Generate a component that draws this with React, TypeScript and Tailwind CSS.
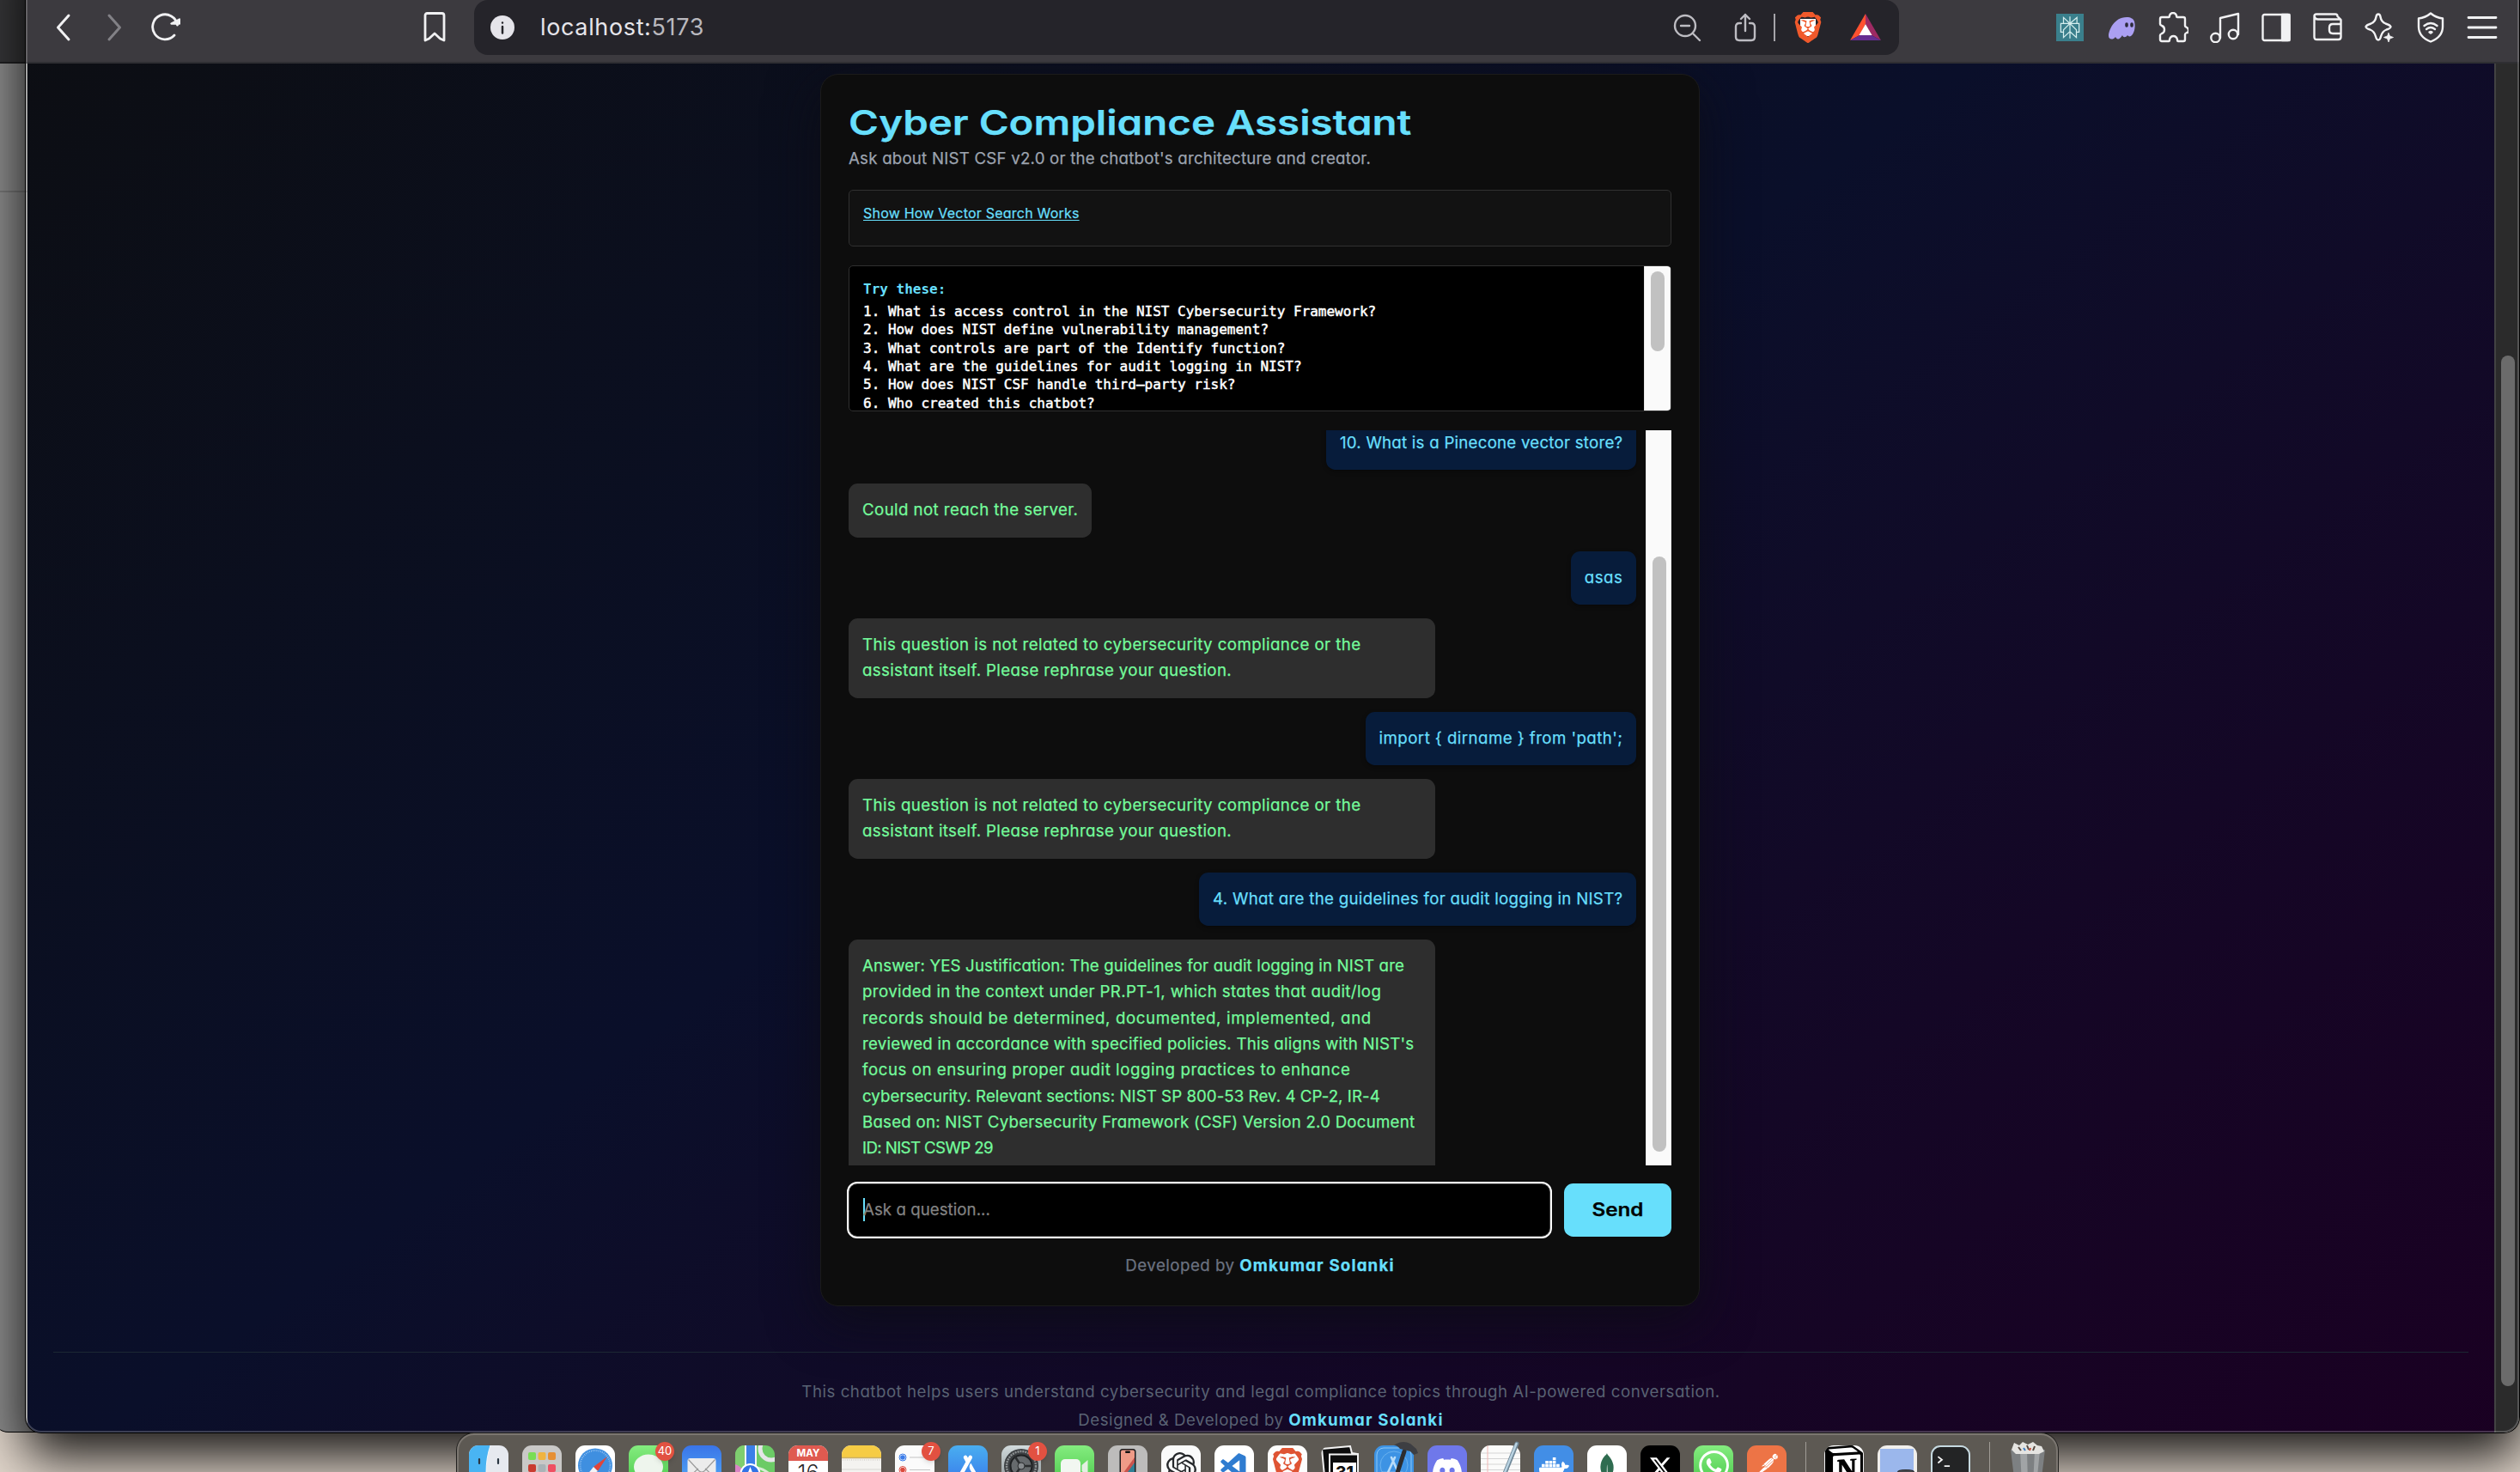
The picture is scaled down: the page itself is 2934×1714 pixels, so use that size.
import type { ReactNode } from "react";
import { SiOpenai, SiBrave, SiDiscord, SiDocker, SiMongodb, SiX, SiWhatsapp, SiPostman, SiNotion, SiAppstore, SiPerplexity } from "react-icons/si";
import { VscVscode } from "react-icons/vsc";

type Line = [text: string, tracking: string];
type Message = { from: "user" | "bot"; lines: Line[] };

const offTopic: Line[] = [
  ["This question is not related to cybersecurity compliance or the", "tracking-[0.447px]"],
  ["assistant itself. Please rephrase your question.", "tracking-[0.372px]"],
];

const messages: Message[] = [
  { from: "user", lines: [["10. What is a Pinecone vector store?", "tracking-[0.251px]"]] },
  { from: "bot", lines: [["Could not reach the server.", "tracking-[0.42px]"]] },
  { from: "user", lines: [["asas", "tracking-[0.5px]"]] },
  { from: "bot", lines: offTopic },
  { from: "user", lines: [["import { dirname } from 'path';", "tracking-[0.446px]"]] },
  { from: "bot", lines: offTopic },
  { from: "user", lines: [["4. What are the guidelines for audit logging in NIST?", "tracking-[0.31px]"]] },
  {
    from: "bot",
    lines: [
      ["Answer: YES Justification: The guidelines for audit logging in NIST are", "tracking-[0.15px]"],
      ["provided in the context under PR.PT-1, which states that audit/log", "tracking-[0.39px]"],
      ["records should be determined, documented, implemented, and", "tracking-[0.64px]"],
      ["reviewed in accordance with specified policies. This aligns with NIST's", "tracking-[0.24px]"],
      ["focus on ensuring proper audit logging practices to enhance", "tracking-[0.56px]"],
      ["cybersecurity. Relevant sections: NIST SP 800-53 Rev. 4 CP-2, IR-4", "tracking-[0.06px]"],
      ["Based on: NIST Cybersecurity Framework (CSF) Version 2.0 Document", "tracking-[0.24px]"],
      ["ID: NIST CSWP 29", "tracking-[-0.595px]"],
    ],
  },
];

const prompts = [
  "1. What is access control in the NIST Cybersecurity Framework?",
  "2. How does NIST define vulnerability management?",
  "3. What controls are part of the Identify function?",
  "4. What are the guidelines for audit logging in NIST?",
  "5. How does NIST CSF handle third–party risk?",
  "6. Who created this chatbot?",
];

function Author() {
  return <span className="font-bold tracking-[1.183px] text-[#67dffc]">Omkumar Solanki</span>;
}

function Bubble({ message }: { message: Message }) {
  const user = message.from === "user";
  return (
    <div className={user ? "flex justify-end" : "flex justify-start"}>
      <div
        className={
          user
            ? "rounded-[10.67px] bg-[#071c3b] p-4 text-[#67dffc] shadow-[0_2px_5px_rgba(0,0,0,0.35)]"
            : "max-w-[683px] rounded-[10.67px] bg-[#2e2e2e] p-4 text-[#74fb9b]" + (message.lines.length > 1 ? " w-[683px]" : "")
        }
      >
        {message.lines.map(([text, tracking]) => (
          <div key={text} className={`leading-[30.33px] whitespace-pre ${tracking}`}>{text}</div>
        ))}
      </div>
    </div>
  );
}

function Card() {
  return (
    <main className="ml-[923px] flex h-[1435px] w-[1024px] flex-col rounded-[21px] border border-[#1b1b1b] bg-[#0d0d0d] p-8 shadow-[0_16px_60px_rgba(13,13,20,0.8)] [-webkit-text-stroke:0.25px]">
      <h1 className="h-12 origin-left scale-x-[1.186] self-start text-[40px] leading-[48px] font-semibold whitespace-nowrap text-[#67dffc]">
        Cyber Compliance Assistant
      </h1>
      <p className="mt-[5px] text-[18.67px] leading-[26.67px] tracking-[0.23px] text-[#9ca3af]">
        Ask about NIST CSF v2.0 or the chatbot's architecture and creator.
      </p>
      <section className="mt-[22px] h-[66px] rounded-[5px] border border-[#303030] bg-[#121212] px-4 pt-[14px]">
        <a className="text-base leading-[21px] tracking-[0.216px] text-[#67dffc] underline underline-offset-2">Show How Vector Search Works</a>
      </section>
      <section className="mt-[22px] flex h-[170px] shrink-0 overflow-hidden rounded-[5px] border border-[#303030] bg-black font-['DejaVu_Sans_Mono',monospace] text-base leading-[21.33px]">
        <div className="grow px-4 pt-4">
          <p className="font-bold text-[#67dffc] [-webkit-text-stroke:0px]">Try these:</p>
          <ol className="mt-[5px] text-white [-webkit-text-stroke:0.5px]">
            {prompts.map((p) => (
              <li key={p} className="whitespace-pre">{p}</li>
            ))}
          </ol>
        </div>
        <div className="w-[31px] border-x border-x-[#e8e8e8] bg-[#fafafa] pt-[6px] pl-[7px]">
          <div className="h-[93px] w-4 rounded-full bg-[#c1c1c1]" />
        </div>
      </section>
      <section className="mt-[22px] flex h-[856px] shrink-0 overflow-hidden text-[18.67px]">
        <div className="-mt-[15.6px] flex grow flex-col gap-4 pr-[10.67px]">
          {messages.map((m, i) => (
            <Bubble key={i} message={m} />
          ))}
        </div>
        <div className="w-[30px] border-x border-x-[#e8e8e8] bg-[#fafafa] pt-[147px] pl-[7px]">
          <div className="h-[693px] w-4 rounded-full bg-[#c1c1c1]" />
        </div>
      </section>
      <div className="mt-[21px] flex h-[62px] shrink-0 gap-4">
        <div className="flex w-[817px] items-center rounded-[10px] border border-[#444] bg-black pl-4 outline-[2.67px] outline-white">
          <span className="h-[27px] w-[2px] bg-[#67dffc]" />
          <span className="-ml-[2px] text-[18.67px] tracking-[0.055px] text-[#838383]">Ask a question...</span>
        </div>
        <button className="flex grow items-center justify-center rounded-[10.67px] bg-[#67dffc] text-[21.33px] font-semibold text-black">
          <span className="scale-x-[1.135]">Send</span>
        </button>
      </div>
      <p className="mt-[21px] text-center text-[18.67px] leading-[26.67px] tracking-[0.504px] text-[#6b7280]">
        Developed by <Author />
      </p>
    </main>
  );
}

const stroke = { fill: "none", stroke: "#f1f1f3", strokeWidth: 2.4, strokeLinecap: "round", strokeLinejoin: "round" } as const;

function Glyph({ children, className = "size-9" }: { children: ReactNode; className?: string }) {
  return (
    <svg viewBox="0 0 36 36" className={`shrink-0 ${className}`} {...stroke}>
      {children}
    </svg>
  );
}

function Slot({ children }: { children: ReactNode }) {
  return <div className="flex w-[60px] justify-center">{children}</div>;
}

function Toolbar() {
  return (
    <header className="h-[154px] shrink-0 border-b-2 border-[#2f2f33] bg-[#3c3a3f] pt-20">
      <div className="flex h-16 items-center">
        <div className="ml-6 flex w-[498px] shrink-0 items-center">
          <Glyph className="ml-[1px] size-9"><path d="M25 4 12.500 18 25 32" strokeWidth="3" /></Glyph>
          <Glyph className="ml-6 size-9"><path d="M12 4 24.500 18 12 32" stroke="#828186" strokeWidth="3" /></Glyph>
          <Glyph className="ml-[23px] size-9">
            <path d="M29 27a14.500 14.500 0 1 1 3.500-12" strokeWidth="2.800" />
            <path d="M25.500 13.500h9.500v-5z" fill="#f1f1f3" />
          </Glyph>
          <Glyph className="ml-[278px] size-9"><path d="M7 4q0-2.500 2.500-2.500h17q2.500 0 2.500 2.500v29l-4.500-2-6.500-6-6.500 6-4.500 2z" strokeWidth="2.800" /></Glyph>
        </div>
        <div className="flex h-16 w-[1659px] shrink-0 items-center rounded-2xl bg-[#25242a] pl-[19px]">
          <span className="flex size-7 flex-col items-center justify-center rounded-full bg-[#e5e4ea]">
            <svg viewBox="0 0 28 28" className="size-7" fill="none" stroke="#25242a" strokeWidth="2.500" strokeLinecap="round">
              <path d="M14 13v7.500M14 8.500v.1" />
            </svg>
          </span>
          <span className="ml-[30px] text-[27px] tracking-[0.64px] text-[#e6e5ea] [font-feature-settings:normal]">
            localhost:<span className="text-[#b9b8be]">5173</span>
          </span>
          <Glyph className="ml-auto size-9">
            <g stroke="#bdbcc2"><circle cx="16" cy="16" r="12" /><path d="m25 25 8 8M11 16h10" /></g>
          </Glyph>
          <Glyph className="ml-8 size-9">
            <g stroke="#bdbcc2"><path d="M18 22V3m-5 5 5-5 5 5M13 13h-2q-4 0-4 4v12q0 4 4 4h14q4 0 4-4V17q0-4-4-4h-2" /></g>
          </Glyph>
          <span className="ml-[15px] h-8 w-[2px] bg-[#a5a4a9]" />
          <span className="relative ml-[20px] flex h-9 w-9 justify-center">
            <span className="absolute inset-x-[9px] inset-y-2 bg-white" />
            <SiBrave className="relative size-9 text-[#f0592b]" />
          </span>
          <svg viewBox="0 0 36 32" className="mr-[21px] ml-[31px] h-8 w-9">
            <path d="M18 0 0 31l11-6L18 12z" fill="#ff5130" />
            <path d="M18 0v12l7 13 11 6z" fill="#9e2a63" />
            <path d="m0 31 11-6h14l11 6z" fill="#662d91" />
            <path d="M18 12 10.500 25h15z" fill="#fff" />
          </svg>
        </div>
        <div className="mr-[13px] ml-auto flex items-center">
          <Slot><span className="flex size-8 items-center justify-center bg-[#3a7f8c]"><SiPerplexity className="size-[26px] text-[#d5eeee]" /></span></Slot>
          <Slot>
            <Glyph><path d="M33 11c2 8-1 15-4 17-2 1-3 0-4-1-2 3-5 3-6 0-3 5-6 6-8 2-3 4-8 3-8-1C3 22 9 6 24 6c5 0 8 2 9 5z" fill="#ab9ff2" stroke="none" /><path d="M24 14v2M30 14v2" stroke="#2c2a3a" strokeWidth="3.500" /></Glyph>
          </Slot>
          <Slot><Glyph><path d="M3 8q0-2 2-2h8q1 0 1-2 1-3 4-3t4 3q0 2 1 2h7q2 0 2 2v8q0 1 2 2 2 1 2 3.500T34 24q-2 1-2 2v6q0 2-2 2h-6q-1 0-1-2-1-4-4.500-4T14 32q0 2-1 2H5q-2 0-2-2v-5q0-1 2-2 3-1 3-4.500T5 16q-2-1-2-2z" /></Glyph></Slot>
          <Slot><Glyph><circle cx="7.500" cy="30" r="5.200" /><circle cx="28" cy="26" r="5.200" /><path d="M13 30V7l21-5v24" /></Glyph></Slot>
          <Slot><Glyph><rect x="2.500" y="3" width="31" height="30" rx="2" /><path d="M25 3h8.500v30H25z" fill="#f1f1f3" /></Glyph></Slot>
          <Slot><Glyph><path d="M2.500 5q0-2.500 2.500-2.500h22q2.500 0 2.500 2.500l4 4v20q0 3-3 3h-25q-3 0-3-3zM3 5.500q0 3 4 3h26M33.500 14H24q-4 0-4 4v3q0 4 4 4h9.500" /></Glyph></Slot>
          <Slot><Glyph><path d="M17 2.500q2 0 2.500 3 1 6 6 8 5 1.500 6 3.500 0 2-5 3.500-5 2-6.500 8-1 4-3 4t-3-4q-1.500-6-6.500-8-5-1.500-5-3.500 1-2 6-3.500 5-2 6-8 .5-3 2.500-3z" /><path d="M29 24.500 30.500 28l4 1.500-4 1.500-1.500 4-1.500-4-4-1.500 4-1.500z" fill="#f1f1f3" strokeWidth=".8" /></Glyph></Slot>
          <Slot><Glyph><path d="M18 1.500q6 5 14 6v9.500q0 12-14 17.500Q4 29 4 17V7.500q8-1 14-6z" /><path d="M10.500 16q7.500-6 15 0M13 20q5-4 10 0M16.500 23.500q1.500-1.200 3 0l-1.500 1z" /></Glyph></Slot>
          <Slot><Glyph><path d="M2 6.500h32M2 18h32M2 29.500h32" strokeWidth="2.800" /></Glyph></Slot>
        </div>
      </div>
    </header>
  );
}

function Tile({ bg = "", badge, children }: { bg?: string; badge?: string; children: ReactNode }) {
  return (
    <div className="flex w-[62px] shrink-0 justify-center">
      <div className="relative size-[46px]">
        <div className={`flex size-[46px] justify-center overflow-hidden rounded-[11px] ${bg}`}>{children}</div>
        {badge && (
          <span className="absolute -top-1 -right-[7px] flex size-[22px] items-center justify-center rounded-full bg-[#e25141] text-[13px] text-white shadow-md">{badge}</span>
        )}
      </div>
    </div>
  );
}

function Art({ children }: { children: ReactNode }) {
  return <svg viewBox="0 0 46 46" className="size-[46px]">{children}</svg>;
}

function Divider() {
  return <div className="flex w-7 shrink-0 justify-center"><span className="-mt-1 h-16 w-px bg-[#a09c96]" /></div>;
}

function Dock() {
  return (
    <div className="absolute top-[1669px] left-[532px] flex h-[72px] w-[1864px] rounded-[20px] border-2 border-[#7b7670] bg-[#5d5953] pt-3 pl-1 shadow-[0_0_0_1px_#22211f]">
      <Tile bg="bg-[#e6e9ef]">
        <Art>
          <path d="M0 0h25q-5 14-5 32h7q0 6 1 14H0z" fill="#49b4f3" />
          <path d="M25 0q-5 14-5 32h7" fill="none" stroke="#f4f7fa" strokeWidth="1" />
          <path d="M12 16v5M34 16v5" stroke="#2a3642" strokeWidth="2.200" strokeLinecap="round" />
        </Art>
      </Tile>
      <Tile bg="bg-[#c9c8c7]">
        <Art>
          <rect x="7" y="8" width="9" height="9" rx="2" fill="#79dd55" /><rect x="18.500" y="8" width="9" height="9" rx="2" fill="#f0b441" /><rect x="30" y="8" width="9" height="9" rx="2" fill="#e68f33" />
          <rect x="7" y="22" width="9" height="9" rx="2" fill="#c93b30" /><rect x="18.500" y="22" width="9" height="9" rx="2" fill="#a9b3b7" /><rect x="30" y="22" width="9" height="9" rx="2" fill="#ef4f63" />
        </Art>
      </Tile>
      <Tile bg="bg-white">
        <Art>
          <circle cx="23" cy="23.500" r="20" fill="#3f8fe0" /><circle cx="23" cy="23.500" r="17.500" fill="none" stroke="#a8cdf3" strokeWidth="2" strokeDasharray=".7 1.500" />
          <path d="M37 13 21 25l5 5z" fill="#e0453a" /><path d="M9 40l12-15 5 5z" fill="#f3f4f6" />
        </Art>
      </Tile>
      <Tile bg="bg-gradient-to-b from-[#84ec7f] to-[#48c94a]" badge="40">
        <Art><ellipse cx="23" cy="25" rx="17" ry="14.500" fill="#eef5ed" /></Art>
      </Tile>
      <Tile bg="bg-gradient-to-b from-[#3a74e8] to-[#55aaf4]">
        <Art><rect x="6.500" y="15" width="33" height="24" rx="3" fill="#ececec" /><path d="m7.500 16.500 12 13q3.500 3 7 0l12-13M8 37l11-10M38 37 27 27" fill="none" stroke="#9b9b9b" strokeWidth="1.200" /></Art>
      </Tile>
      <Tile bg="bg-[#6ccb66]">
        <Art>
          <path d="M0 0h11v46H0z" fill="#7fce6f" /><path d="M0 22q9 3 11 12v12H0z" fill="#d985c5" />
          <path d="M11 0h14v46H11z" fill="#f2f4f6" /><path d="M13 0h10v46H13z" fill="#3b7fe8" />
          <circle cx="42" cy="4" r="13" fill="none" stroke="#e5e5e8" strokeWidth="5" /><path d="M25 26q12 2 21 14" fill="none" stroke="#d9ecd4" strokeWidth="3" />
          <circle cx="17.500" cy="33" r="12" fill="#fff" /><circle cx="17.500" cy="33" r="10" fill="#3272e6" /><path d="m17.500 25 5.500 14-5.500-3-5.500 3z" fill="#fff" />
        </Art>
      </Tile>
      <Tile bg="bg-white">
        <div className="w-full text-center text-[#2a2a2a]">
          <div className="h-[18px] bg-[#df5a50] text-[11.5px] leading-[19px] font-bold text-white">MAY</div>
          <div className="text-[25px] leading-7 font-light">16</div>
        </div>
      </Tile>
      <Tile bg="bg-[#f4f3f0]">
        <Art><path d="M0 0h46v14H0z" fill="#f6cc45" /><path d="M0 14.500h46" stroke="#c9b06a" strokeWidth="1.500" /><path d="M1 17h44" stroke="#c8c6c0" strokeDasharray="1 1.500" /><path d="M0 28h46" stroke="#d8d6d2" /></Art>
      </Tile>
      <Tile bg="bg-[#fbfbfb]" badge="7">
        <Art>
          <circle cx="9" cy="14" r="4" fill="#fff" stroke="#3b7ce8" /><circle cx="9" cy="14" r="2.800" fill="#3b7ce8" />
          <circle cx="9" cy="28.500" r="4" fill="#fff" stroke="#dc4a3d" /><circle cx="9" cy="28.500" r="2.800" fill="#dc4a3d" />
          <path d="M17 14h24M17 28.500h24" stroke="#c4c4c4" strokeWidth="1.200" />
        </Art>
      </Tile>
      <Tile bg="bg-gradient-to-b from-[#4aaef0] to-[#3a78ea]"><SiAppstore className="mt-[10px] size-9 text-white" /></Tile>
      <Tile bg="bg-gradient-to-b from-[#d2dbdd] to-[#8b9294]" badge="1">
        <Art>
          <circle cx="23" cy="24" r="20" fill="#3c3f42" /><circle cx="23" cy="24" r="17" fill="none" stroke="#8c9092" strokeWidth="2.500" strokeDasharray="2 1" />
          <circle cx="23" cy="24" r="12.500" fill="#666a6d" stroke="#1f2123" strokeWidth="2" /><path d="M23 24 15 12M23 24h14M23 24l-8 12" stroke="#2b2d2f" strokeWidth="2.500" /><circle cx="23" cy="24" r="4" fill="#85898c" stroke="#2b2d2f" />
        </Art>
      </Tile>
      <Tile bg="bg-gradient-to-b from-[#84ec7f] to-[#48c94a]">
        <Art><rect x="7" y="16" width="23" height="22" rx="5" fill="#f2f7f1" /><path d="m31.500 23 7-6v18l-7-5z" fill="#e3efe2" /></Art>
      </Tile>
      <Tile bg="bg-[#bdbcbb]">
        <Art>
          <rect x="13.500" y="4" width="19" height="40" rx="3.500" fill="#1c1c1e" /><rect x="15" y="5.500" width="16" height="40" rx="2" fill="#ef9b87" />
          <path d="M31 17 15 42v4h16z" fill="#2f7f95" /><path d="M31 14 15 36v6l16-22z" fill="#c9544d" /><rect x="20" y="6.500" width="6" height="2.500" rx="1.200" fill="#111" />
        </Art>
      </Tile>
      <Tile bg="bg-[#fafafa]"><SiOpenai className="mt-2 size-[35px] text-[#26282b]" /></Tile>
      <Tile bg="bg-white"><VscVscode className="mt-[7px] size-9 text-[#2f7cd0]" /></Tile>
      <Tile bg="bg-[#fdfdfd]"><SiBrave className="mt-[3px] size-[40px] text-[#df5433]" /></Tile>
      <Tile>
        <Art>
          <path d="M1 4 34 1l2 8 7 1v36H5z" fill="#0c0c0c" stroke="#f2f2f2" strokeWidth="2" /><path d="M10 10.500h33v36H10z" fill="#0c0c0c" stroke="#f2f2f2" strokeWidth="2" />
          <path d="M14 20h27v20H14z" fill="#fff" />
          <text x="27.500" y="38" fontSize="19" fontWeight="800" textAnchor="middle" fill="#111">31</text>
        </Art>
      </Tile>
      <div className="relative flex w-[62px] shrink-0 justify-center">
        <div className="size-[46px] overflow-hidden rounded-[11px] bg-[#3d93e4]">
          <Art>
            <rect x="3" y="3" width="40" height="40" rx="8" fill="none" stroke="#8cc8f7" /><circle cx="23" cy="23" r="16" fill="none" stroke="#6ab2ee" />
            <path d="m14 36 10-22M30 36 20 14M9 32h24" fill="none" stroke="#b8dcf9" strokeWidth="2.600" strokeLinecap="round" />
          </Art>
        </div>
        <svg viewBox="0 0 62 52" className="absolute -top-[6px] left-0 h-[52px] w-[62px]">
          <path d="M43 13 31 50" stroke="#2c2d30" strokeWidth="5" strokeLinecap="round" />
          <path d="M34 4q8-4 16 0l7 6 2 5-5 2-4-4-12-3q-3-4-7-4z" fill="#3d3e42" />
        </svg>
      </div>
      <Tile bg="bg-[#6f78ea]"><SiDiscord className="mt-[11px] size-[34px] text-white" /></Tile>
      <div className="relative flex w-[62px] shrink-0 justify-center">
        <div className="size-[46px] overflow-hidden rounded-[11px] bg-[#fbfbfa]">
          <Art><path d="M0 9h46M0 15.500h46M0 22h46M0 28.500h46" stroke="#d5d5d5" /><path d="M8 0v46" stroke="#efb7b4" /></Art>
        </div>
        <svg viewBox="0 0 62 52" className="absolute -top-[6px] left-0 h-[52px] w-[62px]">
          <path d="M50 4 33 46" stroke="#6f8797" strokeWidth="5" strokeLinecap="round" /><path d="M49.500 4 33 45" stroke="#b9d3e2" strokeWidth="2.500" strokeLinecap="round" />
        </svg>
      </div>
      <Tile bg="bg-[#428ee6]"><SiDocker className="mt-[9px] size-[35px] text-white" /></Tile>
      <Tile bg="bg-white"><SiMongodb className="mt-[9px] size-[34px] text-[#2f6c50]" /></Tile>
      <Tile bg="bg-black"><SiX className="mt-[13px] size-[25px] text-white" /></Tile>
      <Tile bg="bg-gradient-to-b from-[#84ec7f] to-[#48c94a]"><SiWhatsapp className="mt-[6px] size-[35px] text-white" /></Tile>
      <Tile bg="bg-[#ed7446]">
        <div className="relative mt-[2px] size-[42px]">
          <span className="absolute inset-1 rounded-full bg-white" />
          <SiPostman className="relative size-[42px] text-[#ed7446]" />
        </div>
      </Tile>
      <Divider />
      <Tile>
        <span className="relative size-[46px]">
          <span className="absolute inset-0 rounded-lg bg-white" />
          <SiNotion className="relative size-[46px] text-black" />
        </span>
      </Tile>
      <Tile bg="bg-[#f1efec]">
        <Art><path d="M3 4h39v27H3z" fill="#9bb7ec" /><path d="M3 31h39v12H3z" fill="#27356b" /><path d="M23 31q0-3 10-3t10 3v15H23z" fill="#1d1e20" /><ellipse cx="33" cy="31" rx="9" ry="2.500" fill="#43464a" /></Art>
      </Tile>
      <Tile bg="border-2 border-[#c6d9e0] bg-[#232425]">
        <Art><path d="m7 10 5 4-5 4M15 22h7" fill="none" stroke="#f4f4f4" strokeWidth="2" /></Art>
      </Tile>
      <Divider />
      <div className="relative flex w-[62px] shrink-0 justify-center">
        <svg viewBox="0 0 46 52" className="absolute -top-[6px] h-[52px] w-[46px]">
          <path d="M3 11h40l-5 41H8z" fill="#7d8082" /><path d="M14 12h8l1 40h-7zM31 12h6l-4 40h-4z" fill="#a1a4a6" />
          <path d="m4 11 3-8 6 3 4-4 6 3 6-3 5 4 5 1 3 6-6 3H9z" fill="#e5e4e1" />
          <path d="m12 8 3 4M22 6l2 5M31 7l-2 5" stroke="#54483f" strokeWidth="2" /><path d="m18 9 2 3" stroke="#3b7dc4" strokeWidth="2" /><path d="m26 9-1 3" stroke="#c5462f" strokeWidth="2" />
        </svg>
      </div>
    </div>
  );
}

export default function App() {
  return (
    <div className="relative h-[1714px] w-[2934px] overflow-hidden bg-[#e0d5ca] font-['Inter','Liberation_Sans',sans-serif] [font-feature-settings:'cv11']">
      <div className="absolute -top-20 -left-2 flex h-[1748px] w-[400px] flex-col overflow-hidden rounded-[18px] border-b border-black bg-[#8c8c8c]">
        <div className="h-[152px] bg-[#363638]" />
        <div className="h-[2px] bg-[#202022]" />
        <div className="h-[150px] border-b-2 border-[#777]" />
      </div>
      <div className="absolute -top-20 left-[30px] flex h-[1748px] w-[2903px] flex-col overflow-hidden rounded-[18px] shadow-[0_0_0_1px_#000,0_28px_60px_rgba(0,0,0,0.9)]">
        <Toolbar />
        <div className="flex min-h-0 grow">
          <div className="ml-[2px] w-[2872px] overflow-hidden">
            <div className="-mt-[446px] h-[2102px] bg-gradient-to-br from-[#0d0d0d] via-[#0a0f2a] to-[#1a0022] pt-[458px]">
              <Card />
              <footer className="mx-[30px] mt-[53px] border-t border-[#1c2733] pt-[29px] text-center text-[18.67px] leading-[33px] tracking-[0.52px] text-[#596273]">
                <p>This chatbot helps users understand cybersecurity and legal compliance topics through AI-powered conversation.</p>
                <p>Designed &amp; Developed by <Author /></p>
              </footer>
            </div>
          </div>
          <div className="w-[29px] border-l-2 border-[#424242] bg-[#2b2b2b] pt-[340px] pl-[6px]">
            <div className="h-[1200px] w-4 rounded-full bg-[#6b6b6b]" />
          </div>
        </div>
        <div className="pointer-events-none absolute inset-0 rounded-[18px] border-2 border-white/20" />
      </div>
      <Dock />
    </div>
  );
}
